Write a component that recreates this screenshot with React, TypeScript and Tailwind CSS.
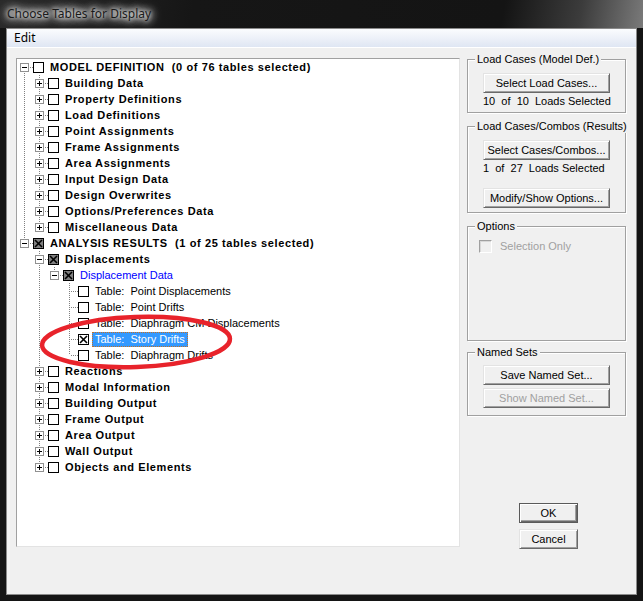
import React from 'react'

type Check = 'none' | 'partial' | 'checked'

type TreeNode = {
  label: string
  bold?: boolean
  blue?: boolean
  check?: Check
  open?: boolean
  closed?: boolean
  selected?: boolean
  children?: TreeNode[]
}

type Row = {
  node: TreeNode
  level: number
  guides: boolean[]
  top: boolean
  bottom: boolean
}

const folder = (label: string): TreeNode => ({ label, bold: true, closed: true })

const tree: TreeNode[] = [
  {
    label: 'MODEL DEFINITION  (0 of 76 tables selected)',
    bold: true,
    open: true,
    children: [
      'Building Data',
      'Property Definitions',
      'Load Definitions',
      'Point Assignments',
      'Frame Assignments',
      'Area Assignments',
      'Input Design Data',
      'Design Overwrites',
      'Options/Preferences Data',
      'Miscellaneous Data',
    ].map(folder),
  },
  {
    label: 'ANALYSIS RESULTS  (1 of 25 tables selected)',
    bold: true,
    open: true,
    check: 'partial',
    children: [
      {
        label: 'Displacements',
        bold: true,
        open: true,
        check: 'partial',
        children: [
          {
            label: 'Displacement Data',
            blue: true,
            open: true,
            check: 'partial',
            children: [
              { label: 'Table:  Point Displacements' },
              { label: 'Table:  Point Drifts' },
              { label: 'Table:  Diaphragm CM Displacements' },
              { label: 'Table:  Story Drifts', check: 'checked', selected: true },
              { label: 'Table:  Diaphragm Drifts' },
            ],
          },
        ],
      },
      ...[
        'Reactions',
        'Modal Information',
        'Building Output',
        'Frame Output',
        'Area Output',
        'Wall Output',
        'Objects and Elements',
      ].map(folder),
    ],
  },
]

function flatten(nodes: TreeNode[], level: number, guides: boolean[], out: Row[]) {
  nodes.forEach((node, i) => {
    const last = i === nodes.length - 1
    out.push({ node, level, guides, top: !(level === 0 && i === 0), bottom: !last })
    if (node.children) flatten(node.children, level + 1, [...guides, !last], out)
  })
  return out
}

const rows = flatten(tree, 0, [], [])

const dots = { stroke: '#808080', strokeDasharray: '1 1', shapeRendering: 'crispEdges' as const }

function Guide({ on }: { on: boolean }) {
  return (
    <svg width="15" height="16" className="shrink-0">
      {on && <line x1="7.5" y1="0" x2="7.5" y2="16" {...dots} />}
    </svg>
  )
}

function Connector({ row }: { row: Row }) {
  const { node } = row
  const hasKids = node.open || node.closed
  return (
    <svg width="16" height="16" className="shrink-0" shapeRendering="crispEdges">
      {row.top && <line x1="7.5" y1="0" x2="7.5" y2="8" {...dots} />}
      {row.bottom && <line x1="7.5" y1="8" x2="7.5" y2="16" {...dots} />}
      <line x1="9" y1="8.5" x2="16" y2="8.5" {...dots} />
      {hasKids && (
        <g>
          <rect x="3.5" y="4.5" width="8" height="8" fill="#fff" stroke="#919191" />
          <line x1="5" y1="8.5" x2="10" y2="8.5" stroke="#000" />
          {node.closed && <line x1="7.5" y1="6" x2="7.5" y2="11" stroke="#000" />}
        </g>
      )}
    </svg>
  )
}

function StateBox({ state = 'none' }: { state?: Check }) {
  return (
    <svg width="14" height="16" className="shrink-0">
      <rect
        x="0.5"
        y="3.5"
        width="10"
        height="10"
        fill={state === 'partial' ? '#808080' : '#fff'}
        stroke="#000"
        shapeRendering="crispEdges"
      />
      {state !== 'none' && (
        <g stroke="#000" strokeWidth="1.6">
          <line x1="2" y1="5" x2="9" y2="12" />
          <line x1="9" y1="5" x2="2" y2="12" />
        </g>
      )}
    </svg>
  )
}

function TreeRow({ row }: { row: Row }) {
  const { node } = row
  return (
    <div className="flex h-4 items-center">
      {row.guides.map((g, i) => (
        <Guide key={i} on={g} />
      ))}
      <Connector row={row} />
      <StateBox state={node.check} />
      <span
        className={`h-[15px] whitespace-pre border px-[2px] leading-[13px] ${
          node.selected
            ? 'border-dotted border-[#c87020] bg-[#3399ff] text-white'
            : 'border-transparent'
        } ${node.bold ? 'font-bold tracking-[0.6px]' : ''} ${node.blue ? 'text-[#0000ff]' : ''}`}
      >
        {node.label}
      </span>
    </div>
  )
}

function Button({ children, disabled, main }: { children: React.ReactNode; disabled?: boolean; main?: boolean }) {
  return (
    <button
      className={`flex h-[20px] w-full items-center justify-center bg-[#f0f0f0] text-[11px] ${
        main
          ? 'border border-[#5a5a5a] shadow-[inset_1px_1px_0_#fff,inset_-1px_-1px_0_#696969,inset_-2px_-2px_0_#a0a0a0]'
          : 'border border-t-[#e3e3e3] border-l-[#e3e3e3] border-r-[#696969] border-b-[#696969] shadow-[inset_1px_1px_0_#fff,inset_-1px_-1px_0_#a0a0a0]'
      } ${disabled ? 'text-[#a0a0a0]' : 'text-black'}`}
    >
      {children}
    </button>
  )
}

function Group({ title, className, children }: { title: string; className: string; children: React.ReactNode }) {
  return (
    <div className={`relative flex flex-col border border-[#a0a0a0] shadow-[inset_1px_1px_0_#fff,1px_1px_0_#fff] ${className}`}>
      <span className="absolute left-[7px] top-[-7px] whitespace-nowrap bg-[#f0f0f0] px-[2px] text-[11px] leading-[13px]">
        {title}
      </span>
      {children}
    </div>
  )
}

export default function App() {
  return (
    <div className="relative flex h-[601px] w-[643px] flex-col overflow-hidden bg-[#141414] font-['Liberation_Sans',Arial,sans-serif] text-black">
      {/* title bar */}
      <div className="flex h-[28px] shrink-0 items-center bg-[linear-gradient(100deg,#2a2a2a_0%,#161616_30%,#141414_78%,#3c3c3c_90%,#7a7a7a_100%)] pl-[7px]">
        <span className="font-['Segoe_UI','Noto_Sans',sans-serif] text-[12px] text-[#1a1a1a] [text-shadow:0_0_8px_#fff,0_0_10px_#fff,0_0_14px_#fff,0_0_4px_#fff]">
          Choose Tables for Display
        </span>
      </div>

      {/* client */}
      <div className="mx-[6px] mb-[6px] flex flex-1 flex-col border border-[#8a8a8a] bg-[#f0f0f0]">
        <div className="flex h-[19px] shrink-0 items-center border-b border-white bg-[linear-gradient(#fbfcfe,#dfe6f3)] pl-[7px] font-['Segoe_UI','Noto_Sans',sans-serif] text-[12px]">
          Edit
        </div>

        <div className="flex pl-[9px] pt-[10px]">
          {/* tree */}
          <div className="h-[489px] w-[444px] shrink-0 overflow-hidden border border-t-[#a0a0a0] border-l-[#a0a0a0] border-r-[#e3e3e3] border-b-[#e3e3e3] bg-white text-[11px]">
            {rows.map((row, i) => (
              <TreeRow key={i} row={row} />
            ))}
          </div>

          {/* right column */}
          <div className="ml-[7px] flex w-[159px] flex-col pt-[1px]">
            <Group title="Load Cases (Model Def.)" className="h-[54px]">
              <div className="mt-[13px] px-[15px]">
                <Button>Select Load Cases...</Button>
              </div>
              <div className="mt-[2px] whitespace-pre pl-[15px] text-[11px] leading-[13px]">10  of  10  Loads Selected</div>
            </Group>

            <Group title="Load Cases/Combos (Results)" className="mt-[13px] h-[87px]">
              <div className="mt-[13px] px-[15px]">
                <Button>Select Cases/Combos...</Button>
              </div>
              <div className="mt-[2px] whitespace-pre pl-[15px] text-[11px] leading-[13px]">1  of  27  Loads Selected</div>
              <div className="mt-[13px] px-[15px]">
                <Button>Modify/Show Options...</Button>
              </div>
            </Group>

            <Group title="Options" className="mt-[13px] h-[115px]">
              <div className="mt-[13px] flex items-center pl-[11px]">
                <span className="h-[13px] w-[13px] border border-t-[#a0a0a0] border-l-[#a0a0a0] border-r-white border-b-white bg-[#f0f0f0] shadow-[inset_1px_1px_0_#d8d8d8]" />
                <span className="ml-[8px] text-[11px] leading-[13px] text-[#a0a0a0]">Selection Only</span>
              </div>
            </Group>

            <Group title="Named Sets" className="mt-[11px] h-[64px]">
              <div className="mt-[12px] px-[15px]">
                <Button>Save Named Set...</Button>
              </div>
              <div className="mt-[3px] px-[15px]">
                <Button disabled>Show Named Set...</Button>
              </div>
            </Group>

            <div className="ml-[52px] mt-[87px] w-[59px]">
              <Button main>OK</Button>
            </div>
            <div className="ml-[52px] mt-[6px] w-[59px]">
              <Button>Cancel</Button>
            </div>
          </div>
        </div>
      </div>

      {/* red annotation ring drawn over the list */}
      <svg className="pointer-events-none absolute left-0 top-0" width="643" height="601">
        <ellipse
          cx="136"
          cy="342"
          rx="94"
          ry="25"
          transform="rotate(-2 136 342)"
          fill="none"
          stroke="#e8232b"
          strokeWidth="4.5"
        />
      </svg>
    </div>
  )
}
